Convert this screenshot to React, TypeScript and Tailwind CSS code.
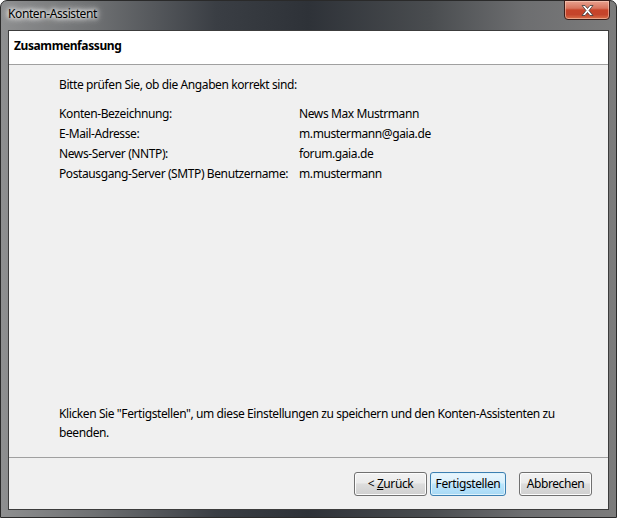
import React from 'react'

const font = { fontFamily: '"Noto Sans", "Open Sans", sans-serif' }

const rows: [string, string][] = [
    ['Konten-Bezeichnung:', 'News Max Mustrmann'],
    ['E-Mail-Adresse:', 'm.mustermann@gaia.de'],
    ['News-Server (NNTP):', 'forum.gaia.de'],
    ['Postausgang-Server (SMTP) Benutzername:', 'm.mustermann'],
]

const WinButton: React.FC<{ children: React.ReactNode; isDefault?: boolean; className?: string }> = ({ children, isDefault, className }) => (
    <button
        type="button"
        className={
            'h-[24px] w-[73px] rounded-[3px] border text-[12px] tracking-[-0.4px] text-black ' +
            (isDefault
                ? 'border-[#3c7fb1] bg-[linear-gradient(#eaf6fd_0%,#d9f0fc_45%,#bee6fd_50%,#a7d9f5_100%)] shadow-[inset_0_0_0_1px_#def3fc] '
                : 'border-[#707070] bg-[linear-gradient(#f2f2f2_0%,#ebebeb_45%,#dddddd_50%,#cfcfcf_100%)] shadow-[inset_0_0_0_1px_#fcfcfc] ') +
            (className ?? '')
        }
    >
        {children}
    </button>
)

export default function App() {
    return (
        <div className="w-[617px] h-[518px] bg-white tracking-[-0.4px]" style={font}>
            <div className="w-[617px] h-[518px] flex flex-col rounded-t-[7px] border border-[#2a2a2a] bg-[linear-gradient(90deg,#8e8f90_0%,#6f7173_15%,#3a3e44_35%,#2e3238_50%,#4a4d50_70%,#6d6e70_85%,#7c7c7c_100%)]">
                {/* Barra de título */}
                <div className="h-[29px] flex justify-between">
                    <span className="pl-[7px] pt-[4px] text-[12px] text-black [text-shadow:0_0_8px_#ffffff,0_0_6px_#ffffff,0_0_4px_#ffffff]">
                        Konten-Assistent
                    </span>
                    <div className="mr-[6px] w-[46px] h-[20px] -mt-px rounded-b-[4px] border border-[#3a1e1a] bg-[linear-gradient(#e8a18f_0%,#d8755e_40%,#c7442a_50%,#c4442b_75%,#d9704a_100%)] shadow-[inset_0_0_0_1px_rgba(255,220,200,0.5)] flex items-center justify-center">
                        <svg width="13" height="11" viewBox="0 0 13 11">
                            <path d="M1 0.5h3l2.5 3 2.5-3h3l-4 5 4 5h-3l-2.5-3-2.5 3h-3l4-5z" fill="#ffffff" stroke="#3a3a3a" strokeWidth="0.8" />
                        </svg>
                    </div>
                </div>

                {/* Contenido */}
                <div className="flex-1 mx-[7px] mb-[7px] border border-[#3c3c3c] bg-[#f0f0f0] flex flex-col">
                    <div className="h-[34px] bg-white border-b border-[#a0a0a0] pl-[5px] pb-[4px] flex items-center">
                        <span className="text-[12px] font-bold text-black">Zusammenfassung</span>
                    </div>

                    <div className="flex-1 pl-[50px] pt-[10px] text-[12px] text-black flex flex-col">
                        <p className="leading-[20px]">Bitte prüfen Sie, ob die Angaben korrekt sind:</p>
                        <div className="mt-[9px] grid grid-cols-[240px_1fr]">
                            {rows.map(([label, value]) => (
                                <React.Fragment key={label}>
                                    <span className="leading-[20px] whitespace-nowrap">{label}</span>
                                    <span className="leading-[20px] whitespace-nowrap">{value}</span>
                                </React.Fragment>
                            ))}
                        </div>
                        <p className="mt-auto mb-[15px] leading-[19px] whitespace-nowrap">
                            Klicken Sie "Fertigstellen", um diese Einstellungen zu speichern und den Konten-Assistenten zu
                            <br />
                            beenden.
                        </p>
                    </div>

                    {/* Botones */}
                    <div className="h-[52px] border-t border-[#a0a0a0] flex justify-end items-start pt-[14px] pr-[16px]">
                        <WinButton>
                            &lt; <span className="underline">Z</span>urück
                        </WinButton>
                        <WinButton isDefault className="ml-[3px] w-[76px]">Fertigstellen</WinButton>
                        <WinButton className="ml-[13px]">Abbrechen</WinButton>
                    </div>
                </div>
            </div>
        </div>
    )
}
